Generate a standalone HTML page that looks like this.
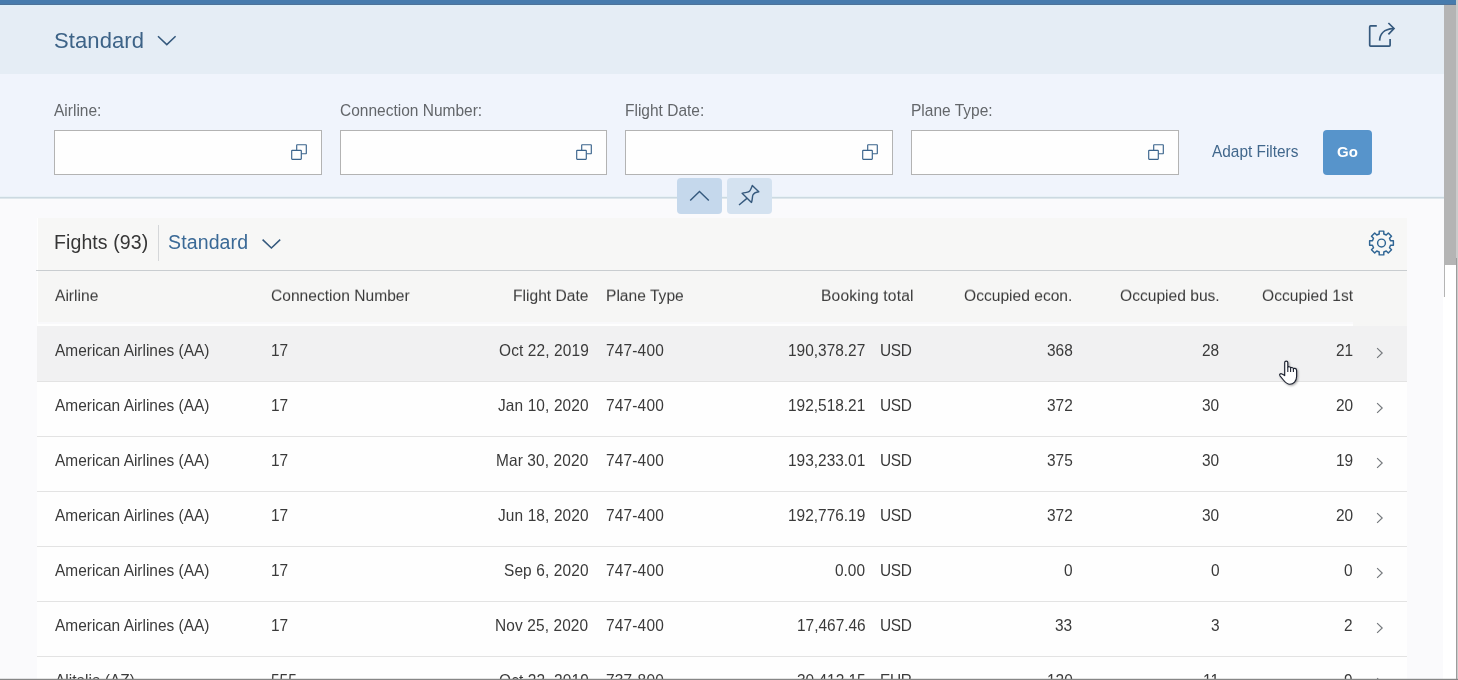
<!DOCTYPE html>
<html lang="en">
<head>
<meta charset="utf-8">
<title>Flights</title>
<style>
html,body{margin:0;padding:0;}
body{width:1458px;height:680px;overflow:hidden;position:relative;background:#fafafc;font-family:"Liberation Sans",Arial,sans-serif;color:#333;}
.abs{position:absolute;}
.c,#title,.lbl,#adapt,#go,#ttl,#tvar{will-change:transform;}
#topbar{left:0;top:0;width:1456px;height:4px;background:#477bad;}
#topbar2{left:0;top:4px;width:1456px;height:1px;background:#4f7298;}
#topbar3{left:0;top:5px;width:1444px;height:1px;background:#dcf1fb;z-index:2;}
#hdr{left:0;top:5px;width:1444px;height:69px;background:#e5edf5;}
#flt{left:0;top:74px;width:1444px;height:123px;background:#f0f4fc;}
#fltline{left:0;top:196px;width:1444px;height:3px;background:linear-gradient(#e8f1f7 0,#e8f1f7 33.300%,#ccd9e1 33.300%,#ccd9e1 66.600%,#dee7ec 66.600%);}
#title{left:54px;top:28px;font-size:22px;line-height:26px;color:#3d6387;letter-spacing:.1px;white-space:nowrap;}
.lbl{top:102px;font-size:15.5px;line-height:18px;color:#63666a;white-space:nowrap;transform-origin:0 14px;transform:scaleY(1.06);}
.inp{top:130px;width:266px;height:43px;border:1px solid #b3b3b3;background:#fefefe;}
.inp svg{position:absolute;left:236px;top:13px;}
#adapt{left:1212px;top:143px;font-size:15.4px;line-height:18px;color:#41678c;white-space:nowrap;transform-origin:0 14px;transform:scaleY(1.06);}
#go{left:1323px;top:130px;width:49px;height:45px;border-radius:4px;background:#5794cb;color:#fff;font-weight:bold;font-size:15px;line-height:44px;text-align:center;}
.sbtn{top:178px;width:45px;height:36px;border-radius:4px;}
#tbl{left:37px;top:218px;width:1370px;height:462px;background:#fefefe;}
#tbar{left:1px;top:0;width:1369px;height:52px;background:#f7f7f6;}
#tbarline{left:-1px;top:52px;width:1371px;height:1px;background:#c9cdd0;}
#ttl{left:17px;top:12px;font-size:19.5px;line-height:24px;color:#363636;white-space:nowrap;letter-spacing:.1px;}
#tsep{left:121px;top:7px;width:1px;height:36px;background:#d5d7d9;}
#tvar{left:131px;top:12px;font-size:19.5px;line-height:24px;color:#3a6996;white-space:nowrap;letter-spacing:.13px;}
#thead{left:1px;top:53px;width:1369px;height:55px;background:#f6f6f5;}
#thead .c{top:16px;font-size:15.6px;}
#hgap{left:1px;top:104px;width:1315px;height:4px;background:linear-gradient(#f9f9fb 0,#f9f9fb 50%,#fefefe 50%);}
.row{left:0;width:1370px;height:54px;border-bottom:1px solid #e3e3e3;background:#fefefe;}
.row.hov{background:#f1f1f2;height:55px;}
.c{position:absolute;top:16px;font-size:15.450px;line-height:18px;white-space:nowrap;color:#3a3a3a;}
.r{text-align:right;}
.row .c{transform-origin:0 14px;transform:scaleY(1.08);}
#thead .c{transform-origin:0 14px;transform:scaleY(.95);}
.row .dt{letter-spacing:.12px;}
.row .pt{letter-spacing:.18px;}
.row .cur{letter-spacing:-.4px;}
#thead .bt{letter-spacing:.2px;}
.row:not(.hov) .c{top:15px;}
.row:not(.hov) .chev{top:20px;}
.chev{position:absolute;left:1339px;top:21px;}
#sbtrack{left:1443px;top:297px;width:13px;height:383px;background:#fff;}
#sbtrack2{left:1444px;top:265px;width:12px;height:32px;background:#fff;}
#sbthumb{left:1444px;top:5px;width:12px;height:260px;background:#b4b4b4;}
#sbline{left:1444px;top:265px;width:1px;height:32px;background:#b4b4b4;}
#redge0{left:1456px;top:0;width:2px;height:680px;background:#cbcbcb;}
#redge{left:1456px;top:258px;width:1px;height:422px;background:#9c9c9c;}
#bedge{left:0;top:678px;width:1458px;height:2px;background:linear-gradient(rgba(150,150,150,.25) 0,rgba(150,150,150,.25) 50%,#868686 50%);}
</style>
</head>
<body>
<div id="topbar" class="abs"></div>
<div id="topbar2" class="abs"></div>
<div id="topbar3" class="abs"></div>
<div id="hdr" class="abs"></div>
<div id="flt" class="abs"></div>
<div id="fltline" class="abs"></div>
<div id="title" class="abs">Standard</div>
<svg class="abs" style="left:155px;top:33px" width="24" height="14" viewBox="0 0 24 14"><path d="M3 3.200l8.800 8.400 8.800-8.400" fill="none" stroke="#35597d" stroke-width="1.55"/></svg>
<svg class="abs" style="left:1364px;top:20px" width="34" height="30" viewBox="0 0 34 30"><path d="M12.8 5.8H6.6a.9.9 0 0 0-.9.9v18.6a.9.9 0 0 0 .9.9h18.6a.9.9 0 0 0 .9-.9V19" fill="none" stroke="#35597d" stroke-width="1.7"/><path d="M15.6 20.6c.2-6.6 4.6-11.6 13.4-12" fill="none" stroke="#35597d" stroke-width="1.7"/><path d="M24.4 3l5.6 5.5-5.6 5.8" fill="none" stroke="#35597d" stroke-width="1.7"/></svg>
<div class="abs lbl" style="left:54px">Airline:</div>
<div class="abs inp" style="left:54px"><svg width="16" height="16" viewBox="0 0 16 16"><path d="M5.700 6.300V1.100a.4.4 0 0 1 .4-.4h8.800a.4.4 0 0 1 .4.4v8.200a.4.4 0 0 1-.4.4H10.300" fill="none" stroke="#3b648c" stroke-width="1.15"/><rect x=".7" y="6.300" width="9.600" height="9" rx=".5" fill="none" stroke="#3b648c" stroke-width="1.15"/></svg></div>
<div class="abs lbl" style="left:340px">Connection Number:</div>
<div class="abs inp" style="left:340px;width:265px"><svg style="left:235px" width="16" height="16" viewBox="0 0 16 16"><path d="M5.700 6.300V1.100a.4.4 0 0 1 .4-.4h8.800a.4.4 0 0 1 .4.4v8.200a.4.4 0 0 1-.4.4H10.300" fill="none" stroke="#3b648c" stroke-width="1.15"/><rect x=".7" y="6.300" width="9.600" height="9" rx=".5" fill="none" stroke="#3b648c" stroke-width="1.15"/></svg></div>
<div class="abs lbl" style="left:625px">Flight Date:</div>
<div class="abs inp" style="left:625px"><svg width="16" height="16" viewBox="0 0 16 16"><path d="M5.700 6.300V1.100a.4.4 0 0 1 .4-.4h8.800a.4.4 0 0 1 .4.4v8.200a.4.4 0 0 1-.4.4H10.300" fill="none" stroke="#3b648c" stroke-width="1.15"/><rect x=".7" y="6.300" width="9.600" height="9" rx=".5" fill="none" stroke="#3b648c" stroke-width="1.15"/></svg></div>
<div class="abs lbl" style="left:911px">Plane Type:</div>
<div class="abs inp" style="left:911px"><svg width="16" height="16" viewBox="0 0 16 16"><path d="M5.700 6.300V1.100a.4.4 0 0 1 .4-.4h8.800a.4.4 0 0 1 .4.4v8.200a.4.4 0 0 1-.4.4H10.300" fill="none" stroke="#3b648c" stroke-width="1.15"/><rect x=".7" y="6.300" width="9.600" height="9" rx=".5" fill="none" stroke="#3b648c" stroke-width="1.15"/></svg></div>
<div id="adapt" class="abs">Adapt Filters</div>
<div id="go" class="abs">Go</div>
<div class="abs sbtn" style="left:677px;background:#c5d8ec"><svg width="45" height="36" viewBox="0 0 45 36"><path d="M13.200 22.600l9.300-9 9.300 9" fill="none" stroke="#35597d" stroke-width="1.45"/></svg></div>
<div class="abs sbtn" style="left:727px;background:#d4e2f0"><svg width="45" height="36" viewBox="0 0 45 36"><g fill="none" stroke="#35597d" stroke-width="1.4" stroke-linejoin="round"><path d="M25.300 7.400L31.800 13.700C29 14.100 26.600 15.400 25.900 17.100C25.200 19 25.500 22 24.500 24.400L15.100 15.300C17.500 14.400 20.300 14.800 21.900 13.700C23.300 12.700 24.400 10 25.300 7.400Z"/><path d="M20.200 20.100L12 27"/></g></svg></div>
<div id="tbl" class="abs">
<div id="tbar" class="abs"></div><div id="tbarline" class="abs"></div>
<div class="abs" id="ttl">Fights (93)</div>
<div class="abs" id="tsep"></div>
<div class="abs" id="tvar">Standard</div>
<svg class="abs" style="left:223px;top:19px" width="24" height="14" viewBox="0 0 24 14"><path d="M2.600 2.600l8.800 8.400 8.800-8.400" fill="none" stroke="#35597d" stroke-width="1.55"/></svg>
<svg class="abs" style="left:1324px;top:6px" width="40" height="40" viewBox="0 0 40 40"><path d="M18.20 9.99 L18.21 7.12 L22.79 7.12 L22.80 9.99 L25.24 11.00 L27.29 8.98 L30.52 12.21 L28.50 14.26 L29.51 16.70 L32.38 16.71 L32.38 21.29 L29.51 21.30 L28.50 23.74 L30.52 25.79 L27.29 29.02 L25.24 27.00 L22.80 28.01 L22.79 30.88 L18.21 30.88 L18.20 28.01 L15.76 27.00 L13.71 29.02 L10.48 25.79 L12.50 23.74 L11.49 21.30 L8.62 21.29 L8.62 16.71 L11.49 16.70 L12.50 14.26 L10.48 12.21 L13.71 8.98 L15.76 11.00Z" fill="none" stroke="#2f6594" stroke-width="1.45" stroke-linejoin="round"/><circle cx="20.5" cy="19" r="3.9" fill="none" stroke="#2f6594" stroke-width="1.45"/></svg>
<div id="thead" class="abs">
<div class="c" style="left:17px">Airline</div>
<div class="c" style="left:233px">Connection Number</div>
<div class="c r dt" style="right:818.5px">Flight Date</div>
<div class="c pt" style="left:568px">Plane Type</div>
<div class="c r bt" style="right:493px">Booking total</div>
<div class="c r" style="right:334.5px">Occupied econ.</div>
<div class="c r" style="right:187.5px">Occupied bus.</div>
<div class="c r" style="right:54px">Occupied 1st</div>
</div>
<div id="hgap" class="abs"></div>
<div class="abs row hov" style="top:108px">
<div class="c" style="left:18px">American Airlines (AA)</div>
<div class="c" style="left:234px">17</div>
<div class="c r dt" style="right:818.5px">Oct 22, 2019</div>
<div class="c pt" style="left:569px">747-400</div>
<div class="c r" style="right:541.5px">190,378.27</div>
<div class="c cur" style="left:842.5px">USD</div>
<div class="c r" style="right:334.5px">368</div>
<div class="c r" style="right:187.5px">28</div>
<div class="c r" style="right:54px">21</div>
<svg class="chev" width="8" height="12" viewBox="0 0 8 12"><path d="M1.100 1.200l5.100 4.800-5.100 4.800" fill="none" stroke="#74787c" stroke-width="1.15"/></svg>
</div>
<div class="abs row" style="top:164px">
<div class="c" style="left:18px">American Airlines (AA)</div>
<div class="c" style="left:234px">17</div>
<div class="c r dt" style="right:818.5px">Jan 10, 2020</div>
<div class="c pt" style="left:569px">747-400</div>
<div class="c r" style="right:541.5px">192,518.21</div>
<div class="c cur" style="left:842.5px">USD</div>
<div class="c r" style="right:334.5px">372</div>
<div class="c r" style="right:187.5px">30</div>
<div class="c r" style="right:54px">20</div>
<svg class="chev" width="8" height="12" viewBox="0 0 8 12"><path d="M1.100 1.200l5.100 4.800-5.100 4.800" fill="none" stroke="#74787c" stroke-width="1.15"/></svg>
</div>
<div class="abs row" style="top:219px">
<div class="c" style="left:18px">American Airlines (AA)</div>
<div class="c" style="left:234px">17</div>
<div class="c r dt" style="right:818.5px">Mar 30, 2020</div>
<div class="c pt" style="left:569px">747-400</div>
<div class="c r" style="right:541.5px">193,233.01</div>
<div class="c cur" style="left:842.5px">USD</div>
<div class="c r" style="right:334.5px">375</div>
<div class="c r" style="right:187.5px">30</div>
<div class="c r" style="right:54px">19</div>
<svg class="chev" width="8" height="12" viewBox="0 0 8 12"><path d="M1.100 1.200l5.100 4.800-5.100 4.800" fill="none" stroke="#74787c" stroke-width="1.15"/></svg>
</div>
<div class="abs row" style="top:274px">
<div class="c" style="left:18px">American Airlines (AA)</div>
<div class="c" style="left:234px">17</div>
<div class="c r dt" style="right:818.5px">Jun 18, 2020</div>
<div class="c pt" style="left:569px">747-400</div>
<div class="c r" style="right:541.5px">192,776.19</div>
<div class="c cur" style="left:842.5px">USD</div>
<div class="c r" style="right:334.5px">372</div>
<div class="c r" style="right:187.5px">30</div>
<div class="c r" style="right:54px">20</div>
<svg class="chev" width="8" height="12" viewBox="0 0 8 12"><path d="M1.100 1.200l5.100 4.800-5.100 4.800" fill="none" stroke="#74787c" stroke-width="1.15"/></svg>
</div>
<div class="abs row" style="top:329px">
<div class="c" style="left:18px">American Airlines (AA)</div>
<div class="c" style="left:234px">17</div>
<div class="c r dt" style="right:818.5px">Sep 6, 2020</div>
<div class="c pt" style="left:569px">747-400</div>
<div class="c r" style="right:541.5px">0.00</div>
<div class="c cur" style="left:842.5px">USD</div>
<div class="c r" style="right:334.5px">0</div>
<div class="c r" style="right:187.5px">0</div>
<div class="c r" style="right:54px">0</div>
<svg class="chev" width="8" height="12" viewBox="0 0 8 12"><path d="M1.100 1.200l5.100 4.800-5.100 4.800" fill="none" stroke="#74787c" stroke-width="1.15"/></svg>
</div>
<div class="abs row" style="top:384px">
<div class="c" style="left:18px">American Airlines (AA)</div>
<div class="c" style="left:234px">17</div>
<div class="c r dt" style="right:818.5px">Nov 25, 2020</div>
<div class="c pt" style="left:569px">747-400</div>
<div class="c r" style="right:541.5px">17,467.46</div>
<div class="c cur" style="left:842.5px">USD</div>
<div class="c r" style="right:334.5px">33</div>
<div class="c r" style="right:187.5px">3</div>
<div class="c r" style="right:54px">2</div>
<svg class="chev" width="8" height="12" viewBox="0 0 8 12"><path d="M1.100 1.200l5.100 4.800-5.100 4.800" fill="none" stroke="#74787c" stroke-width="1.15"/></svg>
</div>
<div class="abs row" style="top:439px">
<div class="c" style="left:18px">Alitalia (AZ)</div>
<div class="c" style="left:234px">555</div>
<div class="c r dt" style="right:818.5px">Oct 22, 2019</div>
<div class="c pt" style="left:569px">737-800</div>
<div class="c r" style="right:541.5px">30,412.15</div>
<div class="c cur" style="left:842.5px">EUR</div>
<div class="c r" style="right:334.5px">120</div>
<div class="c r" style="right:187.5px">11</div>
<div class="c r" style="right:54px">9</div>
<svg class="chev" width="8" height="12" viewBox="0 0 8 12"><path d="M1.100 1.200l5.100 4.800-5.100 4.800" fill="none" stroke="#74787c" stroke-width="1.15"/></svg>
</div>
</div>
<div class="abs" id="sbtrack"></div><div class="abs" id="sbtrack2"></div><div class="abs" id="sbthumb"></div><div class="abs" id="sbline"></div><div class="abs" id="redge0"></div><div class="abs" id="redge"></div>
<svg class="abs" style="left:1278px;top:360px;filter:drop-shadow(1px 1px 1px rgba(0,0,0,.35))" width="22" height="27" viewBox="0 0 22 27"><path d="M6.700 15.600V2.600a1.550 1.550 0 0 1 3.100 0v5c0-1.300 2.800-1.300 2.800.6 0-1 2.800-1 2.800.8 0-1 3.200-1 3.200 1.400v6.100c0 4.500-3.100 7.700-6.800 7.700-3.300 0-4.800-2.200-6.800-4.700l-3-3.700c-1-1.500.6-2.800 2-1.800z" fill="#fff" stroke="#1d2230" stroke-width="1.15" stroke-linejoin="round"/><path d="M9.800 7.600V12M12.600 8.200V12M15.400 9V12" stroke="#1d2230" stroke-width="1.1" fill="none"/></svg>
<div class="abs" id="bedge"></div>
</body>
</html>
